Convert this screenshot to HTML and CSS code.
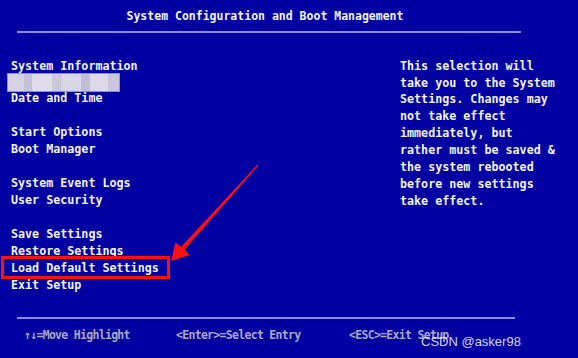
FILE: index.html
```html
<!DOCTYPE html>
<html lang="en">
<head>
  <meta charset="UTF-8" />
  <meta name="viewport" content="width=device-width, initial-scale=1.0"/>
  <title>System Configuration and Boot Management</title>
  <link rel="stylesheet" href="styles.css">
</head>
<body>
  <div class="screen">
    <header class="top">
      <h1 class="title">System Configuration and Boot Management</h1>
      <div class="rule rule-top"></div>
    </header>

    <main class="panes">
      <ul class="menu">
        <li>System Information</li>
        <li><span class="blurred"></span></li>
        <li>Date and Time</li>
        <li class="gap"></li>
        <li>Start Options</li>
        <li>Boot Manager</li>
        <li class="gap"></li>
        <li>System Event Logs</li>
        <li>User Security</li>
        <li class="gap"></li>
        <li>Save Settings</li>
        <li>Restore Settings</li>
        <li><span class="marked">Load Default Settings</span></li>
        <li>Exit Setup</li>
      </ul>

      <p class="help">
        This selection will<br>
        take you to the System<br>
        Settings. Changes may<br>
        not take effect<br>
        immediately, but<br>
        rather must be saved &amp;<br>
        the system rebooted<br>
        before new settings<br>
        take effect.
      </p>
    </main>

    <footer class="bottom">
      <div class="rule rule-bottom"></div>
      <div class="keys">
        <span>&uarr;&darr;=Move Highlight</span>
        <span>&lt;Enter&gt;=Select Entry</span>
        <span>&lt;ESC&gt;=Exit Setup</span>
      </div>
    </footer>

    <!-- annotation arrow drawn over the screen -->
    <svg class="arrow" viewBox="0 0 578 358" width="578" height="358">
      <polygon points="171,261 175.5,242.5 181.2,246.8 257.6,164.6 258.4,165.4 184.6,249.6 189.5,255" fill="#ff1010"/>
    </svg>

    <span class="watermark">CSDN @asker98</span>
  </div>
</body>
</html>
```

FILE: styles.css
```css
:root {
  --bios-bg: #0000a2;
  --bios-text: #f4f4f4;
  --bios-dim: #a9a9c4;
  --bios-rule: #8c8ce6;
  --mark: #ff1010;
}

* {
  box-sizing: border-box;
}

body {
  margin: 0;
  background: var(--bios-bg);
  font-family: "DejaVu Sans Mono", "Liberation Mono", monospace;
  font-weight: bold;
}

.screen {
  position: relative;
  width: 578px;
  height: 358px;
  display: flex;
  flex-direction: column;
  background: var(--bios-bg);
  color: var(--bios-text);
  overflow: hidden;
}

.top {
  padding-top: 8px;
}

.title {
  margin: 0;
  padding-right: 48px;
  text-align: center;
  font-size: 11.5px;
  line-height: 16.8px;
}

.rule {
  height: 2px;
  background: var(--bios-rule);
}

.rule-top {
  margin: 6px 57px 0 17px;
}

.rule-bottom {
  margin: 0 63px 0 17px;
}

.panes {
  flex: 1;
  display: grid;
  grid-template-columns: 389px 1fr;
  padding: 25px 0 0 11px;
  font-size: 11.7px;
  line-height: 16.85px;
}

.menu {
  margin: 0;
  padding: 0;
  list-style: none;
  line-height: 17px;
}

.menu li {
  height: 17px;
  white-space: pre;
}

.blurred {
  display: block;
  width: 113px;
  height: 19px;
  margin: -2px 0 0 -4px;
  border: 1px solid rgba(190, 90, 150, 0.7);
  background:
    linear-gradient(90deg,
      #d6d4e4 0 14%, #c4c2d6 14% 22%, #dedce8 22% 40%,
      #cac8da 40% 48%, #d8d6e6 48% 66%, #c0bed2 66% 74%,
      #dcdae8 74% 90%, #c8c6d8 90% 100%);
}

.marked {
  position: relative;
}

.marked::after {
  content: "";
  position: absolute;
  left: -10px;
  right: -11px;
  top: -5px;
  bottom: -4px;
  border: 3.5px solid var(--mark);
}

.help {
  margin: 0;
  white-space: nowrap;
}

.bottom {
  padding-bottom: 15px;
}

.keys {
  display: grid;
  grid-template-columns: 152px 173px 1fr;
  padding: 8px 0 0 24px;
  color: var(--bios-dim);
  font-size: 11.5px;
  letter-spacing: -0.7px;
  line-height: 16px;
}

.arrow {
  position: absolute;
  left: 0;
  top: 0;
  pointer-events: none;
}

.watermark {
  position: absolute;
  left: 421px;
  top: 334px;
  color: rgba(255, 255, 255, 0.85);
  font-family: "Liberation Sans", Arial, sans-serif;
  font-weight: normal;
  font-size: 13px;
  line-height: 16px;
}
```
